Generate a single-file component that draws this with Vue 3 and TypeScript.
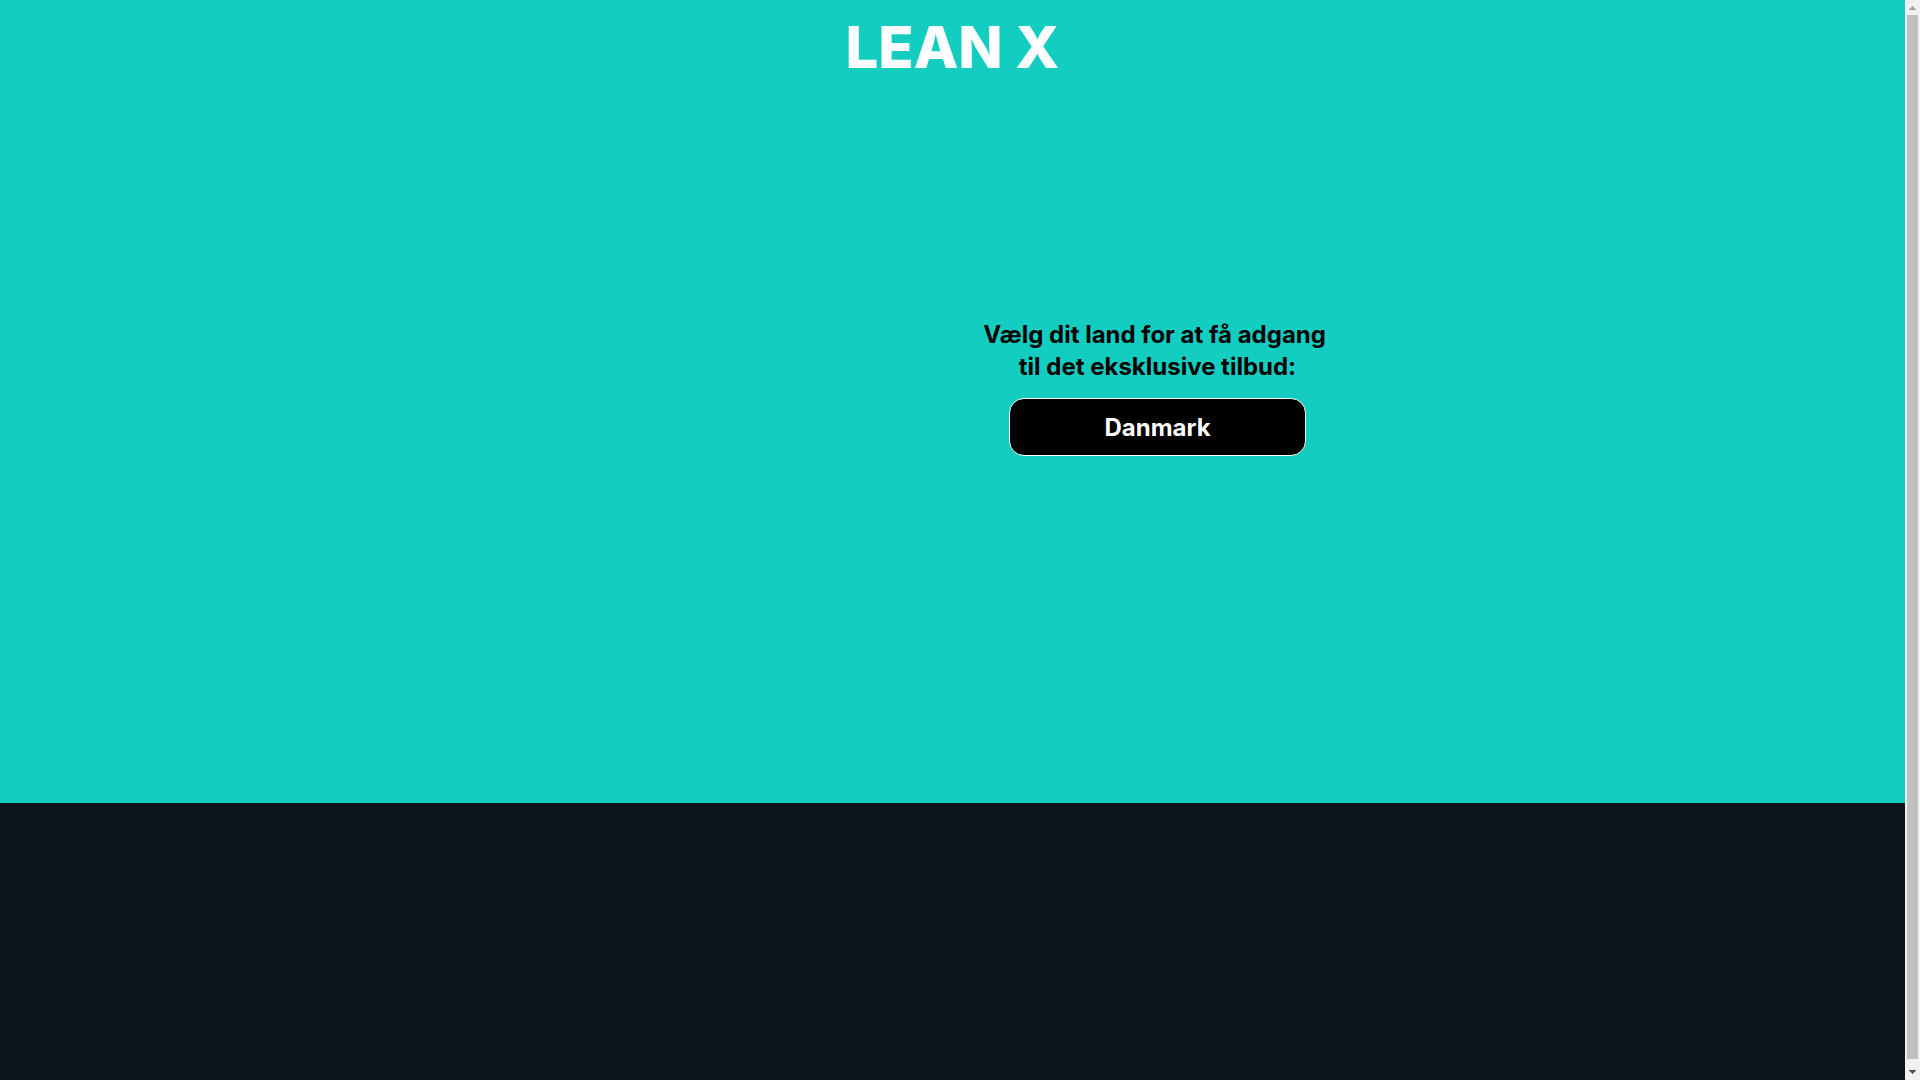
<script setup lang="ts">
interface Country {
  code: string
  name: string
}

const brand = 'LEAN X'
const countries: Country[] = [{ code: 'dk', name: 'Danmark' }]
</script>

<template>
  <div class="window">
    <div class="page">
      <section class="hero">
        <header class="header">
          <div class="logo">{{ brand }}</div>
        </header>
        <main class="columns">
          <div class="column"></div>
          <div class="column offer">
            <h1 class="title">Vælg dit land for at få adgang&nbsp;<br />til det eksklusive tilbud:</h1>
            <button v-for="country in countries" :key="country.code" type="button" class="country">
              {{ country.name }}
            </button>
          </div>
        </main>
      </section>
      <footer class="footer"></footer>
    </div>
    <div class="scrollbar" aria-hidden="true">
      <svg class="arrow" width="15" height="15" viewBox="0 0 15 15" shape-rendering="crispEdges">
        <path d="M7 6h1v1h1v1h1v1h1v1H4V9h1V8h1V7h1z" fill="#a3a3a3" />
      </svg>
      <div class="thumb"></div>
      <svg class="arrow" width="15" height="15" viewBox="0 0 15 15" shape-rendering="crispEdges">
        <path d="M4 5h7v1h-1v1H9v1H8v1H7V8H6V7H5V6H4z" fill="#505050" />
      </svg>
    </div>
  </div>
</template>

<style>
body {
  margin: 0;
  background: #0d141b;
}
</style>

<style scoped>
.window {
  display: flex;
  min-height: 100vh;
  font-family: Inter, "Liberation Sans", sans-serif;
}

.page {
  flex: 1;
  min-width: 0;
  display: flex;
  flex-direction: column;
}

.hero {
  padding: 11px 0 347px;
  background: #14cdc1;
}

.header {
  display: flex;
  justify-content: center;
  margin-bottom: 236px;
}

.logo {
  font-size: 58px;
  line-height: 72px;
  font-weight: 800;
  white-space: nowrap;
  color: #fff;
}

.columns {
  display: flex;
  max-width: 820px;
  margin: 0 auto;
}

.column {
  flex: 1;
}

.offer {
  display: flex;
  flex-direction: column;
  align-items: center;
  gap: 15px;
}

.title {
  margin: 0;
  font-size: 24px;
  line-height: 32px;
  font-weight: 700;
  text-align: center;
  white-space: nowrap;
  color: #000;
}

.country {
  box-sizing: border-box;
  width: 297px;
  height: 58px;
  padding: 0;
  border: 1px solid #fff;
  border-radius: 15px;
  background: #000;
  color: #fff;
  font-family: inherit;
  font-size: 24px;
  font-weight: 700;
  cursor: pointer;
}

.footer {
  flex: 1;
  background: #0d141b;
}

.scrollbar {
  display: flex;
  flex-direction: column;
  width: 15px;
  background: #f1f1f1;
}

.arrow {
  flex: none;
}

.thumb {
  flex: 1;
  margin: 0 2px 6px;
  background: #c1c1c1;
}
</style>
